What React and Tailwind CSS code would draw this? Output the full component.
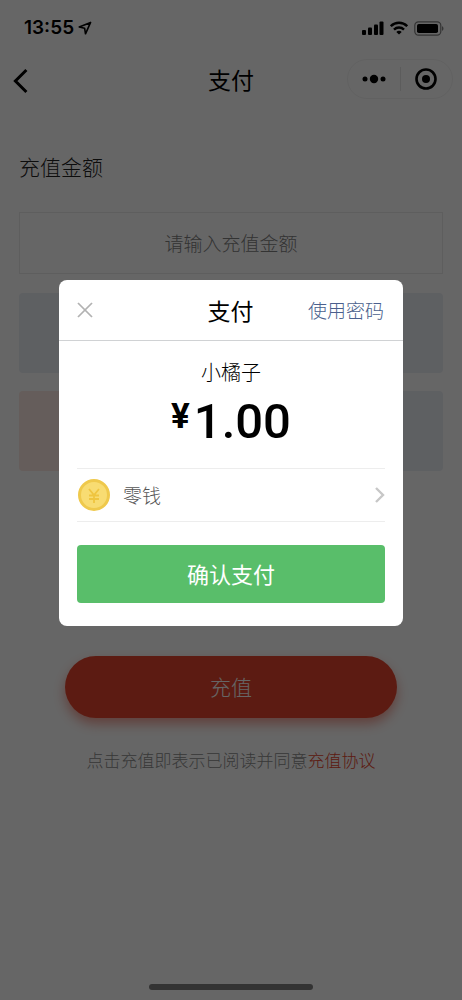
import { X } from "lucide-react";

const amountTiles = [
  "bg-[#ebeff5]",
  "bg-[#ebeff5]",
  "bg-[#ebeff5]",
  "bg-[#fce9e3]",
  "bg-[#ebeff5]",
  "bg-[#ebeff5]",
];

function StatusBar() {
  return (
    <div className="flex h-14 items-center justify-between pl-6 pr-[18px] text-black">
      <div className="flex items-center gap-1">
        <span className="font-['Inter',sans-serif] text-[19px] font-semibold leading-6">13:55</span>
        <svg width="14" height="14" viewBox="0 0 14 14" fill="none" stroke="currentColor" strokeWidth="1.6" strokeLinejoin="round" aria-hidden="true">
          <path d="M12.6 1.4 1.2 6l5.4 1.2.9 5.6z" />
        </svg>
      </div>
      <div className="flex items-center gap-[6px]">
        <svg width="22" height="14" viewBox="0 0 22 14" fill="currentColor" aria-hidden="true">
          <rect x="0" y="9" width="4" height="5" rx="1" />
          <rect x="6" y="6.5" width="4" height="7.5" rx="1" />
          <rect x="12" y="3.5" width="4" height="10.5" rx="1" />
          <rect x="17.5" y="0.5" width="4" height="13.5" rx="1" />
        </svg>
        <svg width="18" height="14" viewBox="0 0 18 14" fill="none" stroke="currentColor" strokeWidth="2.4" aria-hidden="true">
          <path d="M.8 5.2C5.4.6 12.6.6 17.2 5.2" />
          <path d="M4 8.6c2.8-2.8 7.2-2.8 10 0" />
          <path d="M9 13.6 6.3 10.9c1.5-1.4 3.9-1.4 5.4 0z" fill="currentColor" stroke="none" />
        </svg>
        <svg width="30" height="15" viewBox="0 0 30 15" fill="none" aria-hidden="true">
          <rect x="0.8" y="0.8" width="26" height="13.4" rx="3.6" stroke="currentColor" strokeOpacity="0.5" strokeWidth="1.2" />
          <rect x="3" y="3" width="21" height="9" rx="1.8" fill="currentColor" />
          <path d="M28.2 5.2c1.6.6 1.6 4 0 4.6z" fill="currentColor" fillOpacity="0.6" />
        </svg>
      </div>
    </div>
  );
}

function NavBar() {
  return (
    <header className="grid h-[46px] grid-cols-[1fr_auto_1fr] items-center pr-[9px] text-black">
      <button type="button" aria-label="返回" className="justify-self-start pl-3 pt-1">
        <svg width="16" height="26" viewBox="0 0 16 26" fill="none" stroke="currentColor" strokeWidth="3" aria-hidden="true">
          <path d="M14.4 2 3.4 13l11 11" />
        </svg>
      </button>
      <h1 className="pl-[9px] text-[23px] font-normal leading-8">支付</h1>
      <div className="flex h-10 w-[106px] items-center justify-self-end rounded-full border border-[#f3f3f3]">
        <button type="button" aria-label="更多" className="flex flex-1 justify-center">
          <svg width="24" height="10" viewBox="0 0 24 10" fill="currentColor" aria-hidden="true">
            <circle cx="3" cy="5" r="2.5" />
            <circle cx="12" cy="5" r="4.2" />
            <circle cx="21" cy="5" r="2.5" />
          </svg>
        </button>
        <span className="h-6 w-px bg-[#e6e6e6]" />
        <button type="button" aria-label="关闭" className="flex flex-1 justify-center">
          <svg width="22" height="22" viewBox="0 0 22 22" aria-hidden="true">
            <circle cx="11" cy="11" r="9.5" fill="none" stroke="currentColor" strokeWidth="2.6" />
            <circle cx="11" cy="11" r="4" fill="currentColor" />
          </svg>
        </button>
      </div>
    </header>
  );
}

function RechargePage() {
  return (
    <div className="flex min-h-screen flex-col bg-white">
      <StatusBar />
      <NavBar />
      <main className="px-[19px] pt-12">
        <label htmlFor="amount" className="block text-[21px] font-light leading-8 text-[#222]">充值金额</label>
        <input
          id="amount"
          type="text"
          inputMode="decimal"
          placeholder="请输入充值金额"
          className="mt-[30px] block h-[62px] w-full border border-[#ececec] pb-[2px] text-center text-[19px] font-light text-[#333] placeholder:text-[#808080]"
        />
        <div className="mt-[19px] grid grid-cols-3 gap-[18px]">
          {amountTiles.map((tone, i) => (
            <div key={i} className={`h-20 rounded ${tone}`} />
          ))}
        </div>
        <div className="mt-[185px] px-[46px]">
          <button type="button" className="h-[62px] w-full rounded-full bg-[#e6442d] text-[21px] font-light text-white shadow-[0_6px_12px_rgba(230,68,45,0.5)]">
            充值
          </button>
        </div>
        <p className="mt-7 text-center text-[17px] font-light leading-7 text-[#8c8c8c]">
          点击充值即表示已阅读并同意<a href="#agreement" className="text-[#e6442d]">充值协议</a>
        </p>
      </main>
      <div className="mx-auto mb-[10px] mt-auto h-[6px] w-[164px] rounded-full bg-[#808080]" />
    </div>
  );
}

function PayDialog() {
  return (
    <div className="fixed inset-0 flex items-start bg-black/60 px-[59px] pt-[280px]">
      <div role="dialog" aria-modal="true" aria-labelledby="pay-title" className="w-full rounded-lg bg-white pb-[23px] text-black">
        <div className="grid h-[61px] grid-cols-[1fr_auto_1fr] items-center border-b border-[#d0d2d4] pl-3 pr-[19px]">
          <button type="button" aria-label="关闭支付" className="justify-self-start text-[#b2b2b2]">
            <X className="size-7" strokeWidth={1.5} strokeLinecap="butt" />
          </button>
          <h2 id="pay-title" className="pl-[6px] text-[23px] font-normal leading-8">支付</h2>
          <button type="button" className="justify-self-end text-[19px] font-light text-[#4a5f8d]">使用密码</button>
        </div>
        <div className="px-[18px]">
          <p className="mt-[15px] text-center text-[20px] font-light leading-8">小橘子</p>
          <div className="mt-[9px] flex justify-center gap-1 font-['Roboto',sans-serif]">
            <span className="text-[35px] font-bold leading-10">¥</span>
            <span className="text-[49px] font-medium leading-[50px]">1.00</span>
          </div>
          <button type="button" className="mt-[21px] flex h-[54px] w-full items-center border-y border-[#ededed] text-left">
            <svg width="34" height="34" viewBox="0 0 34 34" aria-hidden="true">
              <circle cx="17" cy="17" r="14.5" fill="#f8dc72" stroke="#efc94c" strokeWidth="3" />
              <path d="m12 11 5 6 5-6M17 17v8M12 17.5h10M12 21h10" fill="none" stroke="#efc540" strokeWidth="1.8" />
            </svg>
            <span className="ml-3 flex-1 text-[19px] font-light text-[#555]">零钱</span>
            <svg width="11" height="18" viewBox="0 0 11 18" fill="none" stroke="#c7c7c7" strokeWidth="2.4" aria-hidden="true">
              <path d="m2 2 7 7-7 7" />
            </svg>
          </button>
          <button type="button" className="mt-[23px] h-[58px] w-full rounded bg-[#59be6a] pb-[2px] text-[22px] font-normal text-white">
            确认支付
          </button>
        </div>
      </div>
    </div>
  );
}

export default function App() {
  return (
    <div className="font-['Noto_Sans_CJK_SC',sans-serif]">
      <RechargePage />
      <PayDialog />
    </div>
  );
}
